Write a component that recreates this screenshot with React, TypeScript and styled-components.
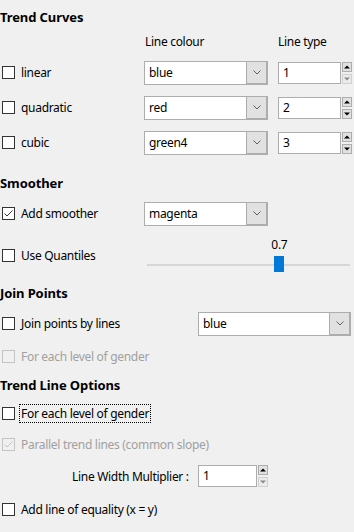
import React from "react";
import styled, { createGlobalStyle } from "styled-components";

const GlobalStyle = createGlobalStyle`
    html, body {
        margin: 0;
        padding: 0;
        background: #f0f0f0;
    }

    body {
        font-family: "Noto Sans", "Liberation Sans", sans-serif;
        font-size: 12px;
        letter-spacing: -0.3px;
        color: #000;
    }
`;

const Panel = styled.div`
    width: 354px;
    height: 532px;
    display: flex;
    flex-direction: column;
    overflow: hidden;
`;

const SectionTitle = styled.div<{ $top?: number; $height?: number }>`
    height: ${p => p.$height ?? 24}px;
    line-height: ${p => p.$height ?? 24}px;
    margin-top: ${p => p.$top ?? 0}px;
    font-weight: 700;
    font-size: 13px;
    letter-spacing: -0.1px;
`;

const Row = styled.div<{ $height: number; $top?: number }>`
    display: flex;
    align-items: center;
    height: ${p => p.$height}px;
    margin-top: ${p => p.$top ?? 0}px;
    flex-shrink: 0;
`;

const HeaderRow = styled(Row)`
    line-height: 16px;
`;

const Cell = styled.div<{ $width: number; $pad?: number }>`
    width: ${p => p.$width}px;
    padding-left: ${p => p.$pad ?? 0}px;
    box-sizing: border-box;
    flex-shrink: 0;
    display: flex;
    align-items: center;
`;

const CheckRow = styled.label<{ $disabled?: boolean }>`
    display: flex;
    align-items: center;
    gap: 6px;
    padding-left: 2px;
    color: ${p => (p.$disabled ? "#a0a0a0" : "#000")};
    white-space: nowrap;
`;

const Box = styled.span<{ $disabled?: boolean }>`
    width: 13px;
    height: 13px;
    box-sizing: border-box;
    border: 1px solid ${p => (p.$disabled ? "#c4c4c4" : "#333")};
    background: ${p => (p.$disabled ? "#f0f0f0" : "#fff")};
    display: flex;
    align-items: center;
    justify-content: center;
    flex-shrink: 0;
`;

const Focused = styled.span`
    outline: 1px dotted #000;
    outline-offset: 0;
    padding: 0 1px;
    margin-left: -1px;
`;

function CheckBox({
    label,
    checked,
    disabled,
    focused
}: {
    label: string;
    checked?: boolean;
    disabled?: boolean;
    focused?: boolean;
}) {
    return (
        <CheckRow $disabled={disabled}>
            <Box $disabled={disabled}>
                {checked && (
                    <svg width="11" height="11" viewBox="0 0 11 11">
                        <path
                            d="M1.5 5.5 L4 8 L9.5 2.5"
                            fill="none"
                            stroke={disabled ? "#c4c4c4" : "#333"}
                            strokeWidth="1"
                        />
                    </svg>
                )}
            </Box>
            {focused ? <Focused>{label}</Focused> : <span>{label}</span>}
        </CheckRow>
    );
}

const ComboFrame = styled.div<{ $width: number }>`
    width: ${p => p.$width}px;
    height: 24px;
    box-sizing: border-box;
    border: 1px solid #adadad;
    background: #fff;
    display: flex;
    flex-shrink: 0;
`;

const ComboText = styled.div`
    flex: 1;
    padding-left: 4px;
    line-height: 22px;
`;

const ComboButton = styled.div`
    width: 20px;
    background: #e1e1e1;
    border-left: 1px solid #adadad;
    box-shadow: inset -1px -1px 0 #adadad;
    display: flex;
    align-items: center;
    justify-content: center;
`;

function Combo({ value, width }: { value: string; width: number }) {
    return (
        <ComboFrame $width={width}>
            <ComboText>{value}</ComboText>
            <ComboButton>
                <svg width="8" height="5" viewBox="0 0 8 5">
                    <path d="M0.5 0.5 L4 4 L7.5 0.5" fill="none" stroke="#606060" strokeWidth="1" />
                </svg>
            </ComboButton>
        </ComboFrame>
    );
}

const SpinWrap = styled.div<{ $gap?: number }>`
    display: flex;
    align-items: center;
    margin-left: ${p => p.$gap ?? 0}px;
    gap: 1px;
`;

const SpinField = styled.div<{ $width: number }>`
    width: ${p => p.$width}px;
    height: 22px;
    box-sizing: border-box;
    border: 1px solid #adadad;
    background: #fff;
    padding-left: 4px;
    line-height: 20px;
`;

const SpinButtons = styled.div`
    display: flex;
    flex-direction: column;
    gap: 2px;
`;

const SpinButton = styled.div<{ $disabled?: boolean }>`
    width: 10px;
    height: 10px;
    box-sizing: border-box;
    border: 1px solid ${p => (p.$disabled ? "#d0d0d0" : "#adadad")};
    background: ${p => (p.$disabled ? "#ebebeb" : "#e1e1e1")};
    display: flex;
    align-items: center;
    justify-content: center;
`;

function Spin({
    value,
    width,
    gap,
    downDisabled
}: {
    value: string;
    width: number;
    gap?: number;
    downDisabled?: boolean;
}) {
    return (
        <SpinWrap $gap={gap}>
            <SpinField $width={width}>{value}</SpinField>
            <SpinButtons>
                <SpinButton>
                    <svg width="6" height="4" viewBox="0 0 6 4">
                        <path d="M0 3.5 L3 0.5 L6 3.5 Z" fill="#000" />
                    </svg>
                </SpinButton>
                <SpinButton $disabled={downDisabled}>
                    <svg width="6" height="4" viewBox="0 0 6 4">
                        <path d="M0 0.5 L3 3.5 L6 0.5 Z" fill={downDisabled ? "#8a8a8a" : "#000"} />
                    </svg>
                </SpinButton>
            </SpinButtons>
        </SpinWrap>
    );
}

const SliderArea = styled.div`
    position: relative;
    align-self: flex-start;
    margin-top: 6px;
    margin-left: 3px;
    width: 203px;
    height: 36px;
`;

const SliderValue = styled.div`
    position: absolute;
    top: 0;
    line-height: 16px;
    transform: translateX(-50%);
`;

const SliderTrack = styled.div`
    margin-top: 27px;
    height: 2px;
    background: #d6d6d6;
`;

const SliderThumb = styled.div`
    position: absolute;
    top: 19px;
    width: 10px;
    height: 16px;
    background: #0078d7;
    transform: translateX(-50%);
`;

function Slider({ value, position }: { value: string; position: number }) {
    const left = `${position * 100}%`;
    return (
        <SliderArea>
            <SliderValue style={{ left }}>{value}</SliderValue>
            <SliderTrack />
            <SliderThumb style={{ left }} />
        </SliderArea>
    );
}

const PlainLabel = styled.div`
    white-space: nowrap;
`;

const curves = [
    { name: "linear", colour: "blue", type: "1", downDisabled: true },
    { name: "quadratic", colour: "red", type: "2" },
    { name: "cubic", colour: "green4", type: "3" }
];

export default function App() {
    return (
        <Panel>
            <GlobalStyle />
            <SectionTitle $top={5}>Trend Curves</SectionTitle>
            <HeaderRow $height={16} $top={5}>
                <Cell $width={144} />
                <Cell $width={134} $pad={1}>Line colour</Cell>
                <Cell $width={70}>Line type</Cell>
            </HeaderRow>
            <Row $height={0} $top={5} />
            {curves.map(c => (
                <Row $height={35} key={c.name}>
                    <Cell $width={144}>
                        <CheckBox label={c.name} />
                    </Cell>
                    <Combo value={c.colour} width={124} />
                    <Spin value={c.type} width={63} gap={10} downDisabled={c.downDisabled} />
                </Row>
            ))}

            <SectionTitle $top={11}>Smoother</SectionTitle>
            <Row $height={35} $top={1}>
                <Cell $width={144}>
                    <CheckBox label="Add smoother" checked />
                </Cell>
                <Combo value="magenta" width={124} />
            </Row>
            <Row $height={48}>
                <Cell $width={144}>
                    <CheckBox label="Use Quantiles" />
                </Cell>
                <Slider value="0.7" position={0.652} />
            </Row>

            <SectionTitle $top={2}>Join Points</SectionTitle>
            <Row $height={35} $top={1}>
                <Cell $width={198}>
                    <CheckBox label="Join points by lines" />
                </Cell>
                <Combo value="blue" width={153} />
            </Row>
            <Row $height={30}>
                <CheckBox label="For each level of gender" disabled />
            </Row>

            <SectionTitle $top={2}>Trend Line Options</SectionTitle>
            <Row $height={32}>
                <CheckBox label="For each level of gender" focused />
            </Row>
            <Row $height={30}>
                <CheckBox label="Parallel trend lines (common slope)" checked disabled />
            </Row>
            <Row $height={34}>
                <Cell $width={198} $pad={72}>
                    <PlainLabel>Line Width Multiplier :</PlainLabel>
                </Cell>
                <Spin value="1" width={59} downDisabled />
            </Row>
            <Row $height={32}>
                <CheckBox label="Add line of equality (x = y)" />
            </Row>
        </Panel>
    );
}
